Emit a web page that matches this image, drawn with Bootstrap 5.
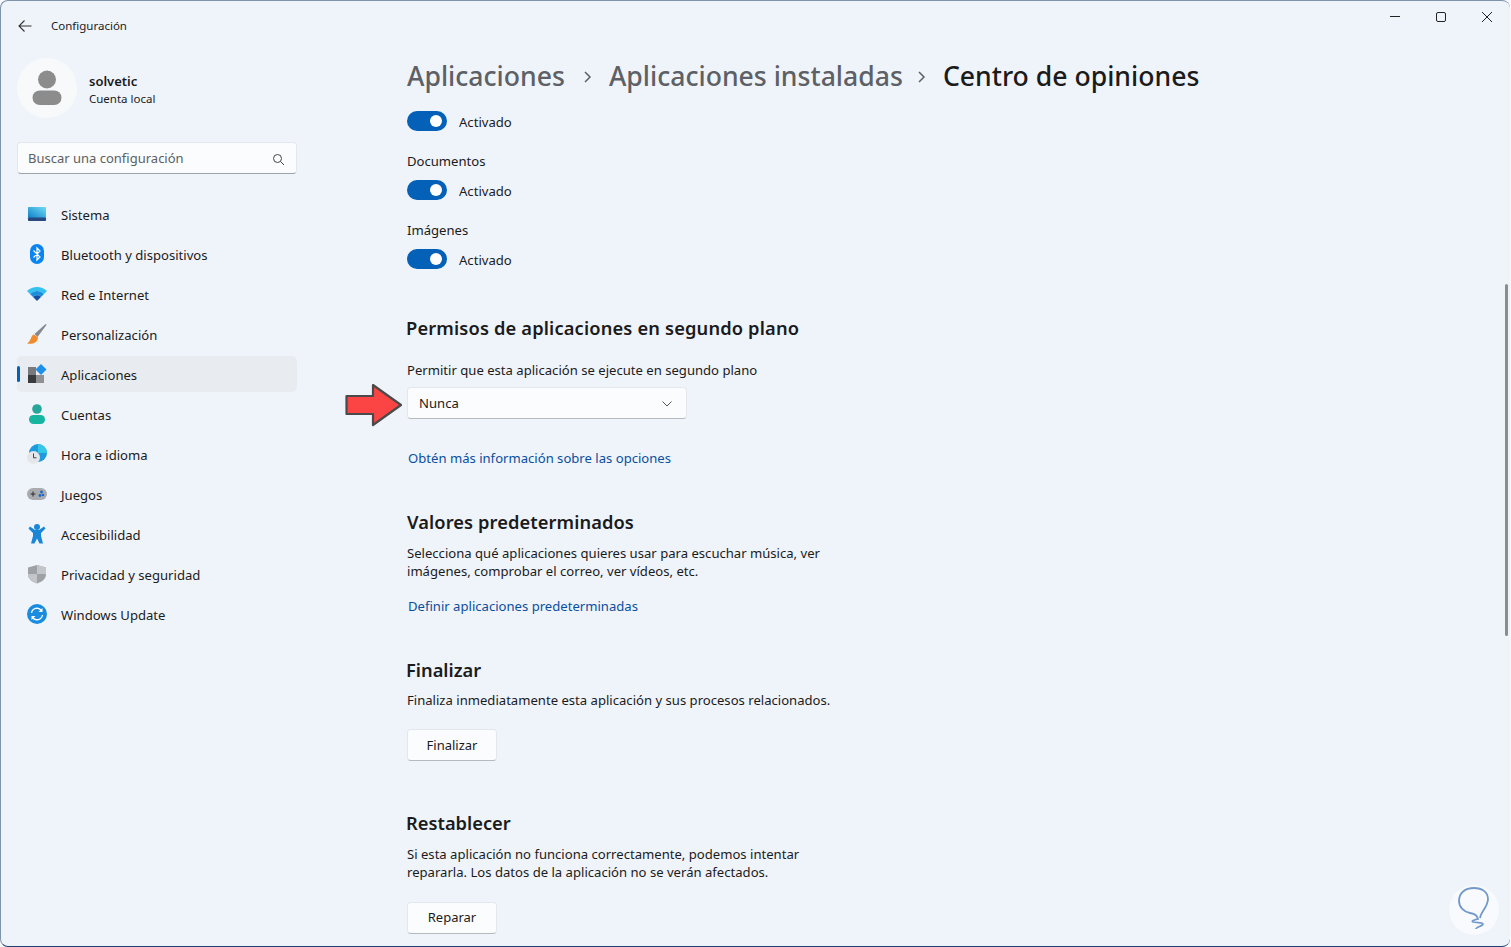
<!DOCTYPE html>
<html lang="es">
<head>
    <meta charset="UTF-8">
    <title>Configuración</title>
    <link href="https://cdn.jsdelivr.net/npm/bootstrap@5.3.0/dist/css/bootstrap.min.css" rel="stylesheet">
    <style>
        html, body { height: 100%; margin: 0; overflow: hidden; background: #f7f9fc; }
        body { font-family: "Noto Sans", "Liberation Sans", sans-serif; font-size: 13.1px; color: #1b1b1b; }
        .win-frame { position: relative; width: 1510px; height: 947px; background: #eff4fb; border: 1px solid #7f93ab; border-bottom: 1px solid #1d3f74; border-right: 0; border-radius: 8px; overflow: hidden; }
        .title-row { height: 50px; padding-left: 16px; }
        .back-ico { width: 16px; height: 16px; margin-right: 18px; }
        .app-name { font-size: 11.5px; }
        .win-ctl { position: absolute; top: 7px; right: 0; }
        .win-btn { width: 46px; height: 18px; display: flex; align-items: center; justify-content: center; }
        .side-col { width: 296px; flex: none; padding-left: 16px; }
        .avatar-pic { width: 60px; height: 60px; background: #f8f9fb; border-radius: 50%; flex: none; }
        .user-box { height: 60px; margin-top: 7px; gap: 12px; }
        .user-text { padding-top: 4px; }
        .user-name { font-size: 13px; font-weight: 600; line-height: 18px; }
        .user-sub { font-size: 11.5px; line-height: 18px; }
        .search-box { width: 280px; height: 32px; margin-top: 24px; background: #fbfcfe; border: 1px solid #e4e7ec; border-bottom-color: #9da3ab; border-radius: 4px; padding: 2px 11px 0 10px; color: #5c5f63; font-size: 13px; }
        .side-nav { margin-top: 22px; gap: 4px; width: 280px; }
        .side-item { position: relative; height: 36px; padding-left: 10px; border-radius: 5px; gap: 14px; color: #1b1b1b; font-size: 13.1px; text-decoration: none; }
        .side-item span { padding-top: 3px; }
        .side-item.is-on { background: #e8ecf1; }
        .side-item.is-on::before { content: ""; position: absolute; left: 0; top: 10px; width: 3px; height: 16px; background: #0560b7; border-radius: 2px; }
        .side-ico { width: 20px; height: 20px; flex: none; }
        .main-col { padding-left: 110px; width: 1100px; }
        .crumbs { height: 38px; margin-top: 7px; font-size: 26.6px; font-weight: 500; color: #5d6065; gap: 16px; white-space: nowrap; }
        .crumbs .now { color: #1b1b1b; }
        .crumb-first { margin-right: 2px; }
        .crumb-mid { margin-right: -2px; }
        .tog-row { height: 20px; gap: 12px; }
        .tog-first { margin-top: 15px; }
        .tog { width: 40px; height: 20px; background: #0560b7; border-radius: 10px; position: relative; flex: none; }
        .tog::after { content: ""; position: absolute; right: 5px; top: 4px; width: 12px; height: 12px; background: #fff; border-radius: 50%; }
        .tog-txt { position: relative; top: 2px; }
        .tog-lbl { line-height: 18px; height: 18px; margin-top: 21px; margin-bottom: 10px; }
        .sec-title { font-size: 18.3px; font-weight: 600; line-height: 24px; margin: 0 0 0 -1px; color: #1b1b1b; }
        .body-line { line-height: 18px; width: 440px; }
        .lnk { color: #0a4f9e; text-decoration: none; line-height: 18px; display: block; margin-left: 1px; }
        .combo { width: 280px; height: 32px; background: #fbfcfe; border: 1px solid #e4e7ec; border-bottom-color: #b5bac1; border-radius: 4px; padding: 1px 14px 0 11px; margin-top: 8px; }
        .fl-btn { display: block; width: 90px; height: 32px; background: #fbfcfe; border: 1px solid #e4e7ec; border-bottom-color: #b5bac1; border-radius: 4px; font-size: 13px; padding: 0; color: #1b1b1b; }
        .sec-a { margin-top: 47px; letter-spacing: .15px; }
        .sec-a-sub { margin-top: 21px; }
        .lnk-a { margin-top: 30px; }
        .sec-b { margin-top: 43px; margin-left: 0; letter-spacing: .08px; }
        .sec-b-sub { margin-top: 10px; }
        .lnk-b { margin-top: 17px; }
        .sec-c { margin-top: 43px; }
        .sec-c-sub { margin-top: 9px; }
        .btn-c { margin-top: 20px; padding-top: 2px; }
        .sec-d { margin-top: 50px; }
        .sec-d-sub { margin-top: 10px; }
        .btn-d { margin-top: 21px; }
        .over-arrow { position: absolute; left: 343px; top: 381px; }
        .scroll-thumb { position: absolute; left: 1504px; top: 283px; width: 3px; height: 352px; background: #8a8e94; border-radius: 2px; }
        .mark-badge { position: absolute; left: 1448px; top: 884px; width: 50px; height: 50px; background: rgba(255,255,255,.55); border-radius: 50%; }
    </style>
</head>
<body>
<div class="win-frame">
    <div class="title-row d-flex align-items-center">
        <svg class="back-ico" viewBox="0 0 16 16" fill="none" stroke="#333" stroke-width="1.1"><path d="M14.5 8H2M7.5 2.5 2 8l5.500 5.500"/></svg>
        <span class="app-name">Configuración</span>
    </div>
    <div class="win-ctl d-flex">
        <div class="win-btn"><svg width="12" height="12" viewBox="0 0 12 12"><path d="M1 5.500h10" stroke="#222"/></svg></div>
        <div class="win-btn"><svg width="12" height="12" viewBox="0 0 12 12" fill="none"><rect x="1.500" y="1.500" width="9" height="9" rx="1.500" stroke="#222"/></svg></div>
        <div class="win-btn"><svg width="12" height="12" viewBox="0 0 12 12"><path d="M1 1l10 10M11 1 1 11" stroke="#222"/></svg></div>
    </div>
    <div class="d-flex">
        <div class="side-col">
            <div class="user-box d-flex align-items-center">
                <div class="avatar-pic d-flex align-items-center justify-content-center">
                    <svg width="30" height="36" viewBox="0 0 30 36" fill="#8c8c8c"><circle cx="15" cy="9.500" r="9"/><rect x="0.500" y="20.500" width="29" height="14.500" rx="7.200"/></svg>
                </div>
                <div class="user-text">
                    <div class="user-name">solvetic</div>
                    <div class="user-sub">Cuenta local</div>
                </div>
            </div>
            <div class="search-box d-flex align-items-center justify-content-between">
                <span>Buscar una configuración</span>
                <svg width="13" height="13" viewBox="0 0 13 13" fill="none" stroke="#444"><circle cx="5.500" cy="5.500" r="4"/><path d="M8.500 8.500 12 12"/></svg>
            </div>
            <div class="side-nav d-flex flex-column">
                <a class="side-item d-flex align-items-center" href="#">
                    <svg class="side-ico" viewBox="0 0 20 20"><defs><linearGradient id="g1" x1="0" y1="1" x2="1" y2="0"><stop offset="0" stop-color="#0f7fc9"/><stop offset="1" stop-color="#6fdcf3"/></linearGradient></defs><rect x="1" y="3" width="18" height="11" rx=".8" fill="url(#g1)"/><rect x="1" y="13.500" width="18" height="3.500" rx=".8" fill="#27497f"/></svg>
                    <span>Sistema</span>
                </a>
                <a class="side-item d-flex align-items-center" href="#">
                    <svg class="side-ico" viewBox="0 0 20 20"><rect x="3" y="0" width="14" height="20" rx="7" fill="#0a84f0"/><path d="M6.500 6.500 13 13l-3 3V4l3 3-6.500 6.500" fill="none" stroke="#fff" stroke-width="1.200"/></svg>
                    <span>Bluetooth y dispositivos</span>
                </a>
                <a class="side-item d-flex align-items-center" href="#">
                    <svg class="side-ico" viewBox="0 0 20 20"><path d="M0 7C5.500 1.500 14.500 1.500 20 7L17 10C12.800 6 7.200 6 3 10Z" fill="#35c1ef"/><path d="M3 10C7.200 6 12.800 6 17 10L14 13C11.500 10.800 8.500 10.800 6 13Z" fill="#1a8fdc"/><path d="M6 13C8.500 10.800 11.500 10.800 14 13L10 17Z" fill="#154fa3"/></svg>
                    <span>Red e Internet</span>
                </a>
                <a class="side-item d-flex align-items-center" href="#">
                    <svg class="side-ico" viewBox="0 0 20 20"><path d="M19.800 .5 18.300 .3 7.500 10l3 3Z" fill="#85888c"/><path d="M7 10.500C3.500 11.500 5 16 0 19.500c5.500.8 10.500-.5 11-6Z" fill="#f08a2b"/></svg>
                    <span>Personalización</span>
                </a>
                <a class="side-item is-on d-flex align-items-center" href="#">
                    <svg class="side-ico" viewBox="0 0 20 20"><rect x="1" y="3" width="8" height="8" fill="#77797c"/><rect x="1" y="11" width="8" height="8" fill="#3a3b3d"/><rect x="9" y="11" width="8" height="8" fill="#8e9093"/><path d="M14 0l5.500 5.500L14 11 8.500 5.500Z" fill="#1d8fe6"/></svg>
                    <span>Aplicaciones</span>
                </a>
                <a class="side-item d-flex align-items-center" href="#">
                    <svg class="side-ico" viewBox="0 0 20 20"><circle cx="10" cy="5" r="4.800" fill="#26a69a"/><rect x="2" y="11" width="16" height="9" rx="4.500" fill="#16b5a0"/></svg>
                    <span>Cuentas</span>
                </a>
                <a class="side-item d-flex align-items-center" href="#">
                    <svg class="side-ico" viewBox="0 0 20 20"><circle cx="11" cy="9" r="9" fill="#1e9bdc"/><path d="M11 0a9 9 0 0 1 9 9h-9Z" fill="#35c6e8"/><circle cx="6.500" cy="13.500" r="6.500" fill="#e4e6ea"/><path d="M6.500 9.500v4.300h3" fill="none" stroke="#444" stroke-width="1"/></svg>
                    <span>Hora e idioma</span>
                </a>
                <a class="side-item d-flex align-items-center" href="#">
                    <svg class="side-ico" viewBox="0 0 20 20"><rect x="0" y="4" width="20" height="12" rx="6" fill="#a9abaf"/><path d="M3.500 10h5M6 7.500v5" stroke="#333" stroke-width="1.100"/><circle cx="14.500" cy="8" r="1.400" fill="#1668c4"/><circle cx="13" cy="11.500" r="1.400" fill="#1668c4"/><circle cx="16" cy="11" r="1.200" fill="#1668c4"/></svg>
                    <span>Juegos</span>
                </a>
                <a class="side-item d-flex align-items-center" href="#">
                    <svg class="side-ico" viewBox="0 0 20 20"><circle cx="10" cy="3" r="3" fill="#1a86d8"/><path d="M1.500 4.500 3 2.500 8 6h4l5-3.500 1.500 2L14 9v3l2 7.500h-3.500L10 14.500l-2.500 5H4l2-7.500V9Z" fill="#1a86d8"/></svg>
                    <span>Accesibilidad</span>
                </a>
                <a class="side-item d-flex align-items-center" href="#">
                    <svg class="side-ico" viewBox="0 0 20 20"><path d="M10 1 1 3.500V10c0 5 4 8 9 9.500 5-1.500 9-4.500 9-9.500V3.500Z" fill="#9ea1a5"/><path d="M10 1v9H1c0 5 4 8 9 9.500V10h9V3.500Z" fill="#c3c5c8"/></svg>
                    <span>Privacidad y seguridad</span>
                </a>
                <a class="side-item d-flex align-items-center" href="#">
                    <svg class="side-ico" viewBox="0 0 20 20"><circle cx="10" cy="10" r="10" fill="#1a8ce0"/><path d="M4.500 9A5.600 5.600 0 0 1 14.500 6.500M15.500 11A5.600 5.600 0 0 1 5.500 13.500" fill="none" stroke="#fff" stroke-width="1.300"/><path d="M15.500 4v4h-4ZM4.500 16v-4h4Z" fill="#fff"/></svg>
                    <span>Windows Update</span>
                </a>
            </div>
        </div>
        <div class="main-col">
            <div class="crumbs d-flex align-items-center">
                <span class="crumb-first">Aplicaciones</span>
                <svg width="10" height="14" viewBox="0 0 10 14" fill="none" stroke="#5d6065" stroke-width="1.500"><path d="M2 2l5 5-5 5"/></svg>
                <span class="crumb-mid">Aplicaciones instaladas</span>
                <svg width="10" height="14" viewBox="0 0 10 14" fill="none" stroke="#5d6065" stroke-width="1.500"><path d="M2 2l5 5-5 5"/></svg>
                <span class="now">Centro de opiniones</span>
            </div>
            <div class="tog-row tog-first d-flex align-items-center"><div class="tog"></div><span class="tog-txt">Activado</span></div>
            <div class="tog-lbl">Documentos</div>
            <div class="tog-row d-flex align-items-center"><div class="tog"></div><span class="tog-txt">Activado</span></div>
            <div class="tog-lbl">Imágenes</div>
            <div class="tog-row d-flex align-items-center"><div class="tog"></div><span class="tog-txt">Activado</span></div>

            <h2 class="sec-title sec-a">Permisos de aplicaciones en segundo plano</h2>
            <div class="body-line sec-a-sub">Permitir que esta aplicación se ejecute en segundo plano</div>
            <div class="combo d-flex align-items-center justify-content-between">
                <span>Nunca</span>
                <svg width="10" height="6" viewBox="0 0 10 6" fill="none" stroke="#555"><path d="M.5.500 5 5 9.500.500"/></svg>
            </div>
            <a class="lnk lnk-a" href="#">Obtén más información sobre las opciones</a>

            <h2 class="sec-title sec-b">Valores predeterminados</h2>
            <div class="body-line sec-b-sub">Selecciona qué aplicaciones quieres usar para escuchar música, ver imágenes, comprobar el correo, ver vídeos, etc.</div>
            <a class="lnk lnk-b" href="#">Definir aplicaciones predeterminadas</a>

            <h2 class="sec-title sec-c">Finalizar</h2>
            <div class="body-line sec-c-sub">Finaliza inmediatamente esta aplicación y sus procesos relacionados.</div>
            <button class="fl-btn btn-c" type="button">Finalizar</button>

            <h2 class="sec-title sec-d">Restablecer</h2>
            <div class="body-line sec-d-sub">Si esta aplicación no funciona correctamente, podemos intentar repararla. Los datos de la aplicación no se verán afectados.</div>
            <button class="fl-btn btn-d" type="button">Reparar</button>
        </div>
    </div>
    <svg class="over-arrow" width="60" height="46" viewBox="0 0 60 46"><path d="M2.500 14H29V3L57 23 29 43V32H2.500Z" fill="#fb4444" stroke="#4a4a4a" stroke-width="2.200" stroke-linejoin="round"/></svg>
    <div class="scroll-thumb"></div>
    <div class="mark-badge d-flex align-items-center justify-content-center">
        <svg width="36" height="46" viewBox="0 0 36 46" fill="none" stroke="#7299cb" stroke-width="1.800"><path d="M24 31C25 24 32 20 32 12C32 5 26 1 18 1C9 1 3 6 3 14C3 20 8 25 14 26C20 27 21 29 22 32C18 33 15 34 17 35C21 36 27 35 27 37C27 39 20 40 20 42"/></svg>
    </div>
</div>
<script src="https://cdn.jsdelivr.net/npm/bootstrap@5.3.0/dist/js/bootstrap.bundle.min.js"></script>
</body>
</html>
